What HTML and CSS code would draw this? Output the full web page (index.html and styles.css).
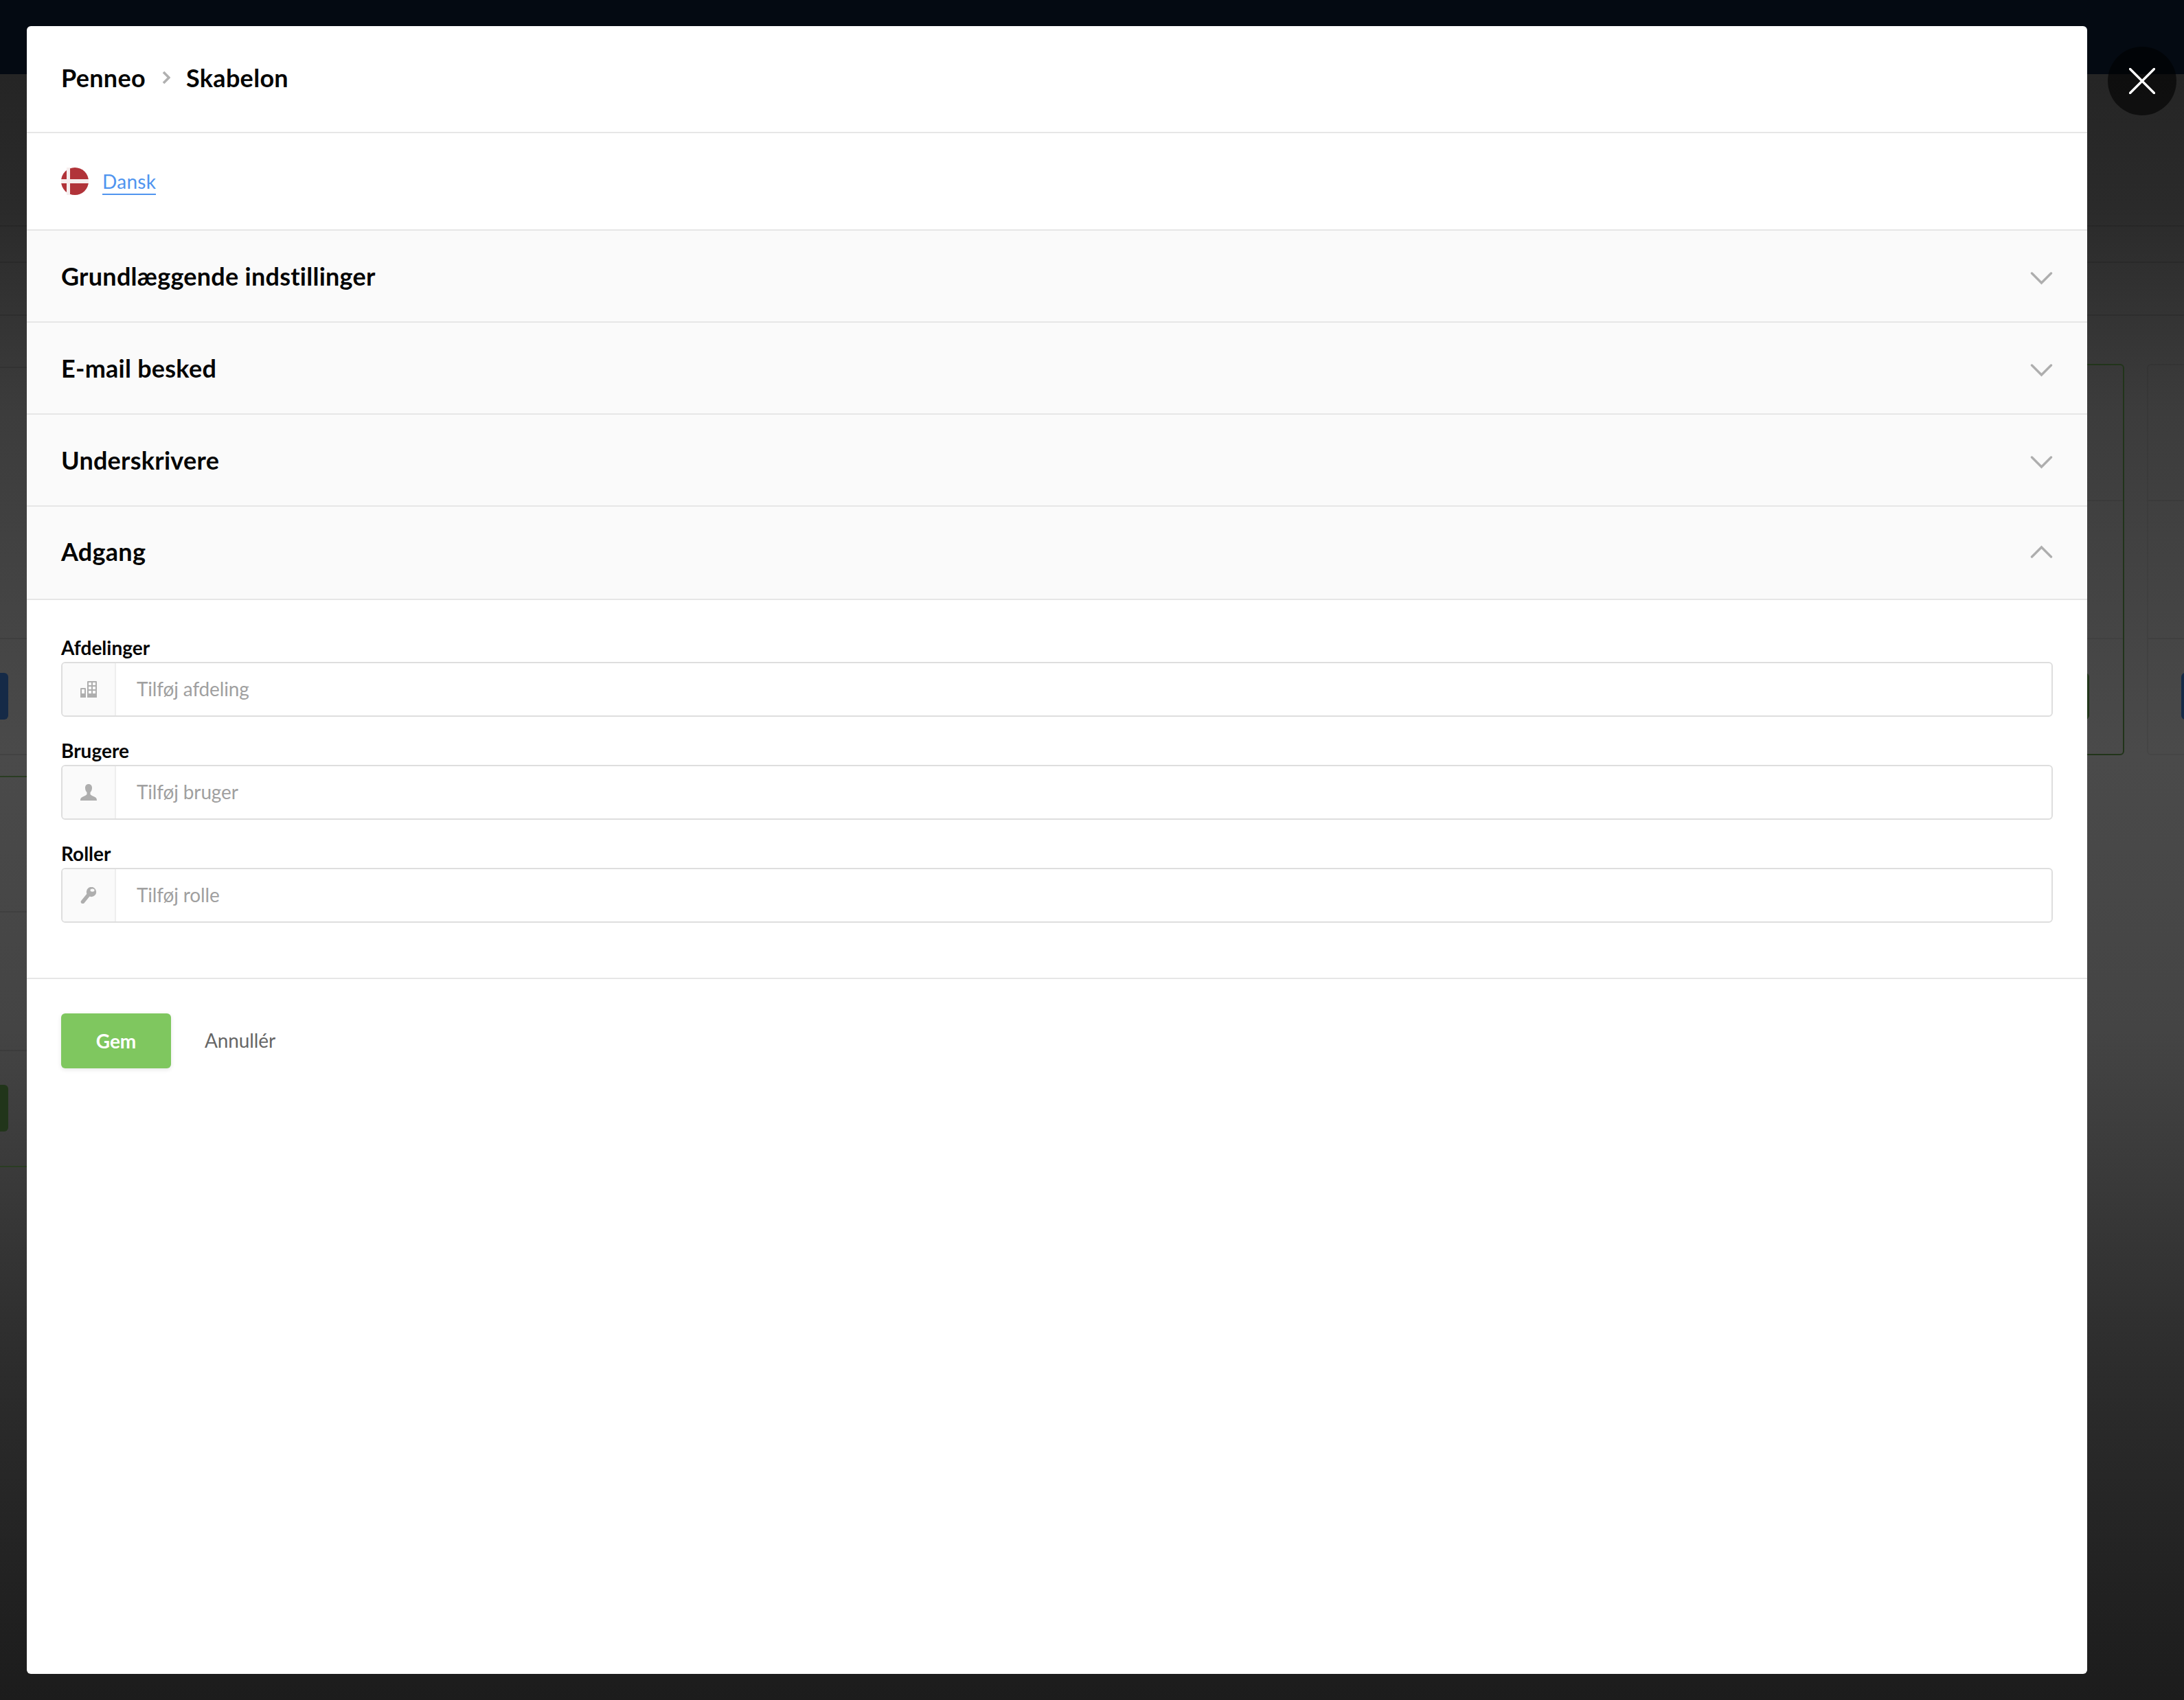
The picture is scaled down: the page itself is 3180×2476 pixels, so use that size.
FILE: index.html
```html
<!DOCTYPE html>
<html lang="da">
<head>
    <meta charset="UTF-8">
    <title>Penneo - Skabelon</title>
    <link rel="stylesheet" href="styles.css">
</head>
<body>
    <!-- Siden bag overlayet -->
    <div class="backdrop">
        <div class="page-topbar"></div>
        <div class="page-lines"></div>
        <div class="page-left">
            <span class="page-btn page-btn-blue"></span>
            <span class="page-btn page-btn-green"></span>
        </div>
        <div class="page-card page-card-active">
            <span class="page-btn page-btn-green-r"></span>
        </div>
        <div class="page-card page-card-next">
            <span class="page-btn page-btn-blue-r"></span>
        </div>
    </div>

    <button class="close-btn">
        <svg width="38" height="38" viewBox="0 0 38 38"><path d="M1.500 1.500L36.500 36.500M36.500 1.500L1.500 36.500" stroke="#fff" stroke-width="3.400" stroke-linecap="round"/></svg>
    </button>

    <div class="modal">
        <div class="modal-header">
            <span>Penneo</span>
            <svg class="crumb-sep" width="12" height="20" viewBox="0 0 12 20"><path d="M2 2L10 10L2 18" fill="none" stroke="#b0b0b0" stroke-width="3.600"/></svg>
            <span>Skabelon</span>
        </div>

        <div class="lang-row">
            <svg class="flag" width="40" height="40" viewBox="0 0 40 40">
                <circle cx="20" cy="20" r="20" fill="#b13339"/>
                <rect x="8" width="5" height="40" fill="#f6eeee"/>
                <rect y="17" width="40" height="6" fill="#f6eeee"/>
            </svg>
            <a class="lang-link">Dansk</a>
        </div>

        <div class="acc-row">
            <h2>Grundlæggende indstillinger</h2>
            <svg class="chevron" width="34" height="20" viewBox="0 0 34 20"><path d="M3.500 2L17.500 16L31.500 2" fill="none" stroke="#aeaeae" stroke-width="3.400" stroke-linecap="round"/></svg>
        </div>
        <div class="acc-row">
            <h2>E-mail besked</h2>
            <svg class="chevron" width="34" height="20" viewBox="0 0 34 20"><path d="M3.500 2L17.500 16L31.500 2" fill="none" stroke="#aeaeae" stroke-width="3.400" stroke-linecap="round"/></svg>
        </div>
        <div class="acc-row">
            <h2>Underskrivere</h2>
            <svg class="chevron" width="34" height="20" viewBox="0 0 34 20"><path d="M3.500 2L17.500 16L31.500 2" fill="none" stroke="#aeaeae" stroke-width="3.400" stroke-linecap="round"/></svg>
        </div>
        <div class="acc-row acc-open">
            <h2>Adgang</h2>
            <svg class="chevron chevron-up" width="34" height="20" viewBox="0 0 34 20"><path d="M3.500 18L17.500 4L31.500 18" fill="none" stroke="#aeaeae" stroke-width="3.400" stroke-linecap="round"/></svg>
        </div>

        <div class="form">
            <div class="field">
                <label>Afdelinger</label>
                <div class="input-group">
                    <span class="addon">
                        <svg width="24" height="24" viewBox="0 0 24 24" fill="#aeaeae">
                            <path fill-rule="evenodd" d="M0 11a1 1 0 0 1 1-1h6a1 1 0 0 1 1 1v13H0zM2 12v6h4v-6z"/>
                            <path fill-rule="evenodd" d="M10 1a1 1 0 0 1 1-1h12a1 1 0 0 1 1 1v23H10zM12 2v4h4V2zM18 2v4h4V2zM12 8v4h4V8zM18 8v4h4V8zM12 14v4h4v-4zM18 14v4h4v-4z"/>
                        </svg>
                    </span>
                    <span class="placeholder">Tilføj afdeling</span>
                </div>
            </div>
            <div class="field">
                <label>Brugere</label>
                <div class="input-group">
                    <span class="addon">
                        <svg width="24" height="24" viewBox="0 0 24 24" fill="#aeaeae">
                            <path d="M12 0c3 0 5 2.200 5 5.500 0 2.600-1 5-2.500 6.500v2.500c0 1.500 3 2.500 6 4 2 1 3.500 2 3.500 5.500H0c0-3.500 1.500-4.500 3.500-5.500 3-1.500 6-2.500 6-4V12C8 10.500 7 8.100 7 5.500 7 2.200 9 0 12 0z"/>
                        </svg>
                    </span>
                    <span class="placeholder">Tilføj bruger</span>
                </div>
            </div>
            <div class="field">
                <label>Roller</label>
                <div class="input-group">
                    <span class="addon">
                        <svg width="24" height="24" viewBox="0 0 24 24">
                            <path d="M12 11L3.500 21.500" stroke="#aeaeae" stroke-width="5.500" stroke-linecap="round"/>
                            <circle cx="16" cy="7" r="7.200" fill="#aeaeae"/>
                            <ellipse cx="17.500" cy="4.600" rx="3" ry="2.200" fill="#fafafa"/>
                        </svg>
                    </span>
                    <span class="placeholder">Tilføj rolle</span>
                </div>
            </div>
        </div>

        <div class="modal-footer">
            <button class="btn-save">Gem</button>
            <a class="btn-cancel">Annullér</a>
        </div>
    </div>
</body>
</html>
```
FILE: styles.css
```css
* {
    margin: 0;
    padding: 0;
    box-sizing: border-box;
}

body {
    font-family: 'Lato', 'Open Sans', sans-serif;
    width: 3180px;
    height: 2476px;
    overflow: hidden;
    position: relative;
    padding: 38px 0 0 39px;
    background: linear-gradient(180deg, #252525 108px, #2a2a2a 300px, #3c3c3c 600px, #4a4a4a 1100px, #444 1500px, #2c2c2c 2000px, #1c1c1c 2476px);
}

/* Siden bag overlayet */
.backdrop {
    position: absolute;
    top: 0;
    left: 0;
    width: 100%;
    height: 100%;
}

.page-topbar {
    height: 108px;
    background: #040a12;
}

.page-lines {
    position: absolute;
    top: 0;
    left: 0;
    width: 100%;
    height: 100%;
    background-image:
        linear-gradient(rgba(0, 0, 0, 0.12), rgba(0, 0, 0, 0.12)),
        linear-gradient(rgba(0, 0, 0, 0.12), rgba(0, 0, 0, 0.12)),
        linear-gradient(rgba(0, 0, 0, 0.12), rgba(0, 0, 0, 0.12));
    background-size: 100% 2px;
    background-repeat: no-repeat;
    background-position: 0 328px, 0 381px, 0 458px;
}

.page-left {
    position: absolute;
    left: 0;
    top: 0;
    width: 39px;
    height: 100%;
    background-image:
        linear-gradient(rgba(0, 0, 0, 0.1), rgba(0, 0, 0, 0.1)),
        linear-gradient(rgba(0, 0, 0, 0.1), rgba(0, 0, 0, 0.1)),
        linear-gradient(rgba(0, 0, 0, 0.1), rgba(0, 0, 0, 0.1)),
        linear-gradient(#2a3d22, #2a3d22),
        linear-gradient(rgba(0, 0, 0, 0.1), rgba(0, 0, 0, 0.1)),
        linear-gradient(rgba(0, 0, 0, 0.1), rgba(0, 0, 0, 0.1)),
        linear-gradient(#2a3d22, #2a3d22);
    background-size: 100% 2px;
    background-repeat: no-repeat;
    background-position: 0 534px, 0 929px, 0 1098px, 0 1130px, 0 1327px, 0 1529px, 0 1698px;
}

.page-card {
    position: absolute;
    top: 530px;
    height: 570px;
    border-radius: 6px;
    background-image:
        linear-gradient(rgba(0, 0, 0, 0.08), rgba(0, 0, 0, 0.08)),
        linear-gradient(rgba(0, 0, 0, 0.08), rgba(0, 0, 0, 0.08));
    background-size: 100% 2px;
    background-repeat: no-repeat;
    background-position: 0 196px, 0 397px;
}

.page-card-active {
    left: 3000px;
    width: 93px;
    border: 2px solid #21341a;
}

.page-card-next {
    left: 3126px;
    width: 100px;
    border: 2px solid rgba(0, 0, 0, 0.06);
}

.page-btn {
    position: absolute;
    height: 68px;
    border-radius: 6px;
}

.page-btn-blue {
    background: #152a47;
    left: -20px;
    top: 980px;
    width: 32px;
}

.page-btn-green {
    background: #21351a;
    left: -20px;
    top: 1580px;
    width: 32px;
}

.page-btn-green-r {
    background: #21351a;
    left: 20px;
    top: 448px;
    width: 20px;
}

.page-btn-blue-r {
    background: #152a47;
    left: 48px;
    top: 448px;
    width: 40px;
}

/* Botão fechar */
.close-btn {
    position: absolute;
    left: 3069px;
    top: 68px;
    width: 100px;
    height: 100px;
    border: none;
    border-radius: 50%;
    background: rgba(0, 0, 0, 0.6);
    display: flex;
    align-items: center;
    justify-content: center;
}

/* Modal */
.modal {
    position: relative;
    width: 3000px;
    height: 2400px;
    background: #fff;
    border-radius: 6px;
    overflow: hidden;
}

.modal-header {
    height: 156px;
    padding: 0 50px 4px;
    display: flex;
    align-items: center;
    font-size: 36px;
    font-weight: 700;
    letter-spacing: 0.3px;
    color: #050505;
    border-bottom: 2px solid #e6e6e6;
}

.crumb-sep {
    margin: 0 23px 0 24px;
}

.lang-row {
    height: 142px;
    padding: 0 50px;
    display: flex;
    align-items: center;
    gap: 20px;
    border-bottom: 2px solid #e6e6e6;
}

.lang-link {
    color: #4f94ef;
    font-size: 28px;
    letter-spacing: 0.3px;
    height: 40px;
    line-height: 41px;
    border-bottom: 2px solid #4f94ef;
}

.acc-row {
    height: 134px;
    padding: 0 50px;
    display: flex;
    align-items: center;
    justify-content: space-between;
    background: #fafafa;
    border-bottom: 2px solid #e6e6e6;
}

.acc-row h2 {
    font-size: 36px;
    font-weight: 700;
    letter-spacing: 0.25px;
    color: #050505;
}

.acc-open {
    height: 136px;
}

.acc-open h2 {
    margin-bottom: 4px;
}

.chevron {
    flex: none;
    margin-top: 7px;
}

.chevron-up {
    margin-top: 0;
    margin-bottom: 4px;
}

.form {
    padding: 52px 50px 80px;
    display: flex;
    flex-direction: column;
    gap: 32px;
    border-bottom: 2px solid #e6e6e6;
}

.field label {
    display: block;
    font-size: 28px;
    font-weight: 700;
    line-height: 34px;
    margin-bottom: 4px;
    color: #050505;
}

.input-group {
    height: 80px;
    display: flex;
    align-items: center;
    border: 2px solid #dedede;
    border-radius: 6px;
}

.addon {
    width: 78px;
    height: 100%;
    flex: none;
    display: flex;
    align-items: center;
    justify-content: center;
    background: #fafafa;
    border-right: 2px solid #eee;
    border-radius: 4px 0 0 4px;
}

.placeholder {
    padding: 0 0 2px 30px;
    font-size: 28px;
    letter-spacing: -0.15px;
    color: #a0a0a0;
}

.modal-footer {
    padding: 50px;
    display: flex;
    align-items: center;
}

.btn-save {
    width: 160px;
    height: 80px;
    border: none;
    border-radius: 6px;
    background: #7fc75f;
    color: #fff;
    font-family: inherit;
    font-size: 28px;
    font-weight: 700;
    box-shadow: 0 2px 6px rgba(0, 0, 0, 0.1);
}

.btn-cancel {
    margin-left: 49px;
    padding-bottom: 3px;
    font-size: 28px;
    letter-spacing: -0.1px;
    color: #666;
}
```
